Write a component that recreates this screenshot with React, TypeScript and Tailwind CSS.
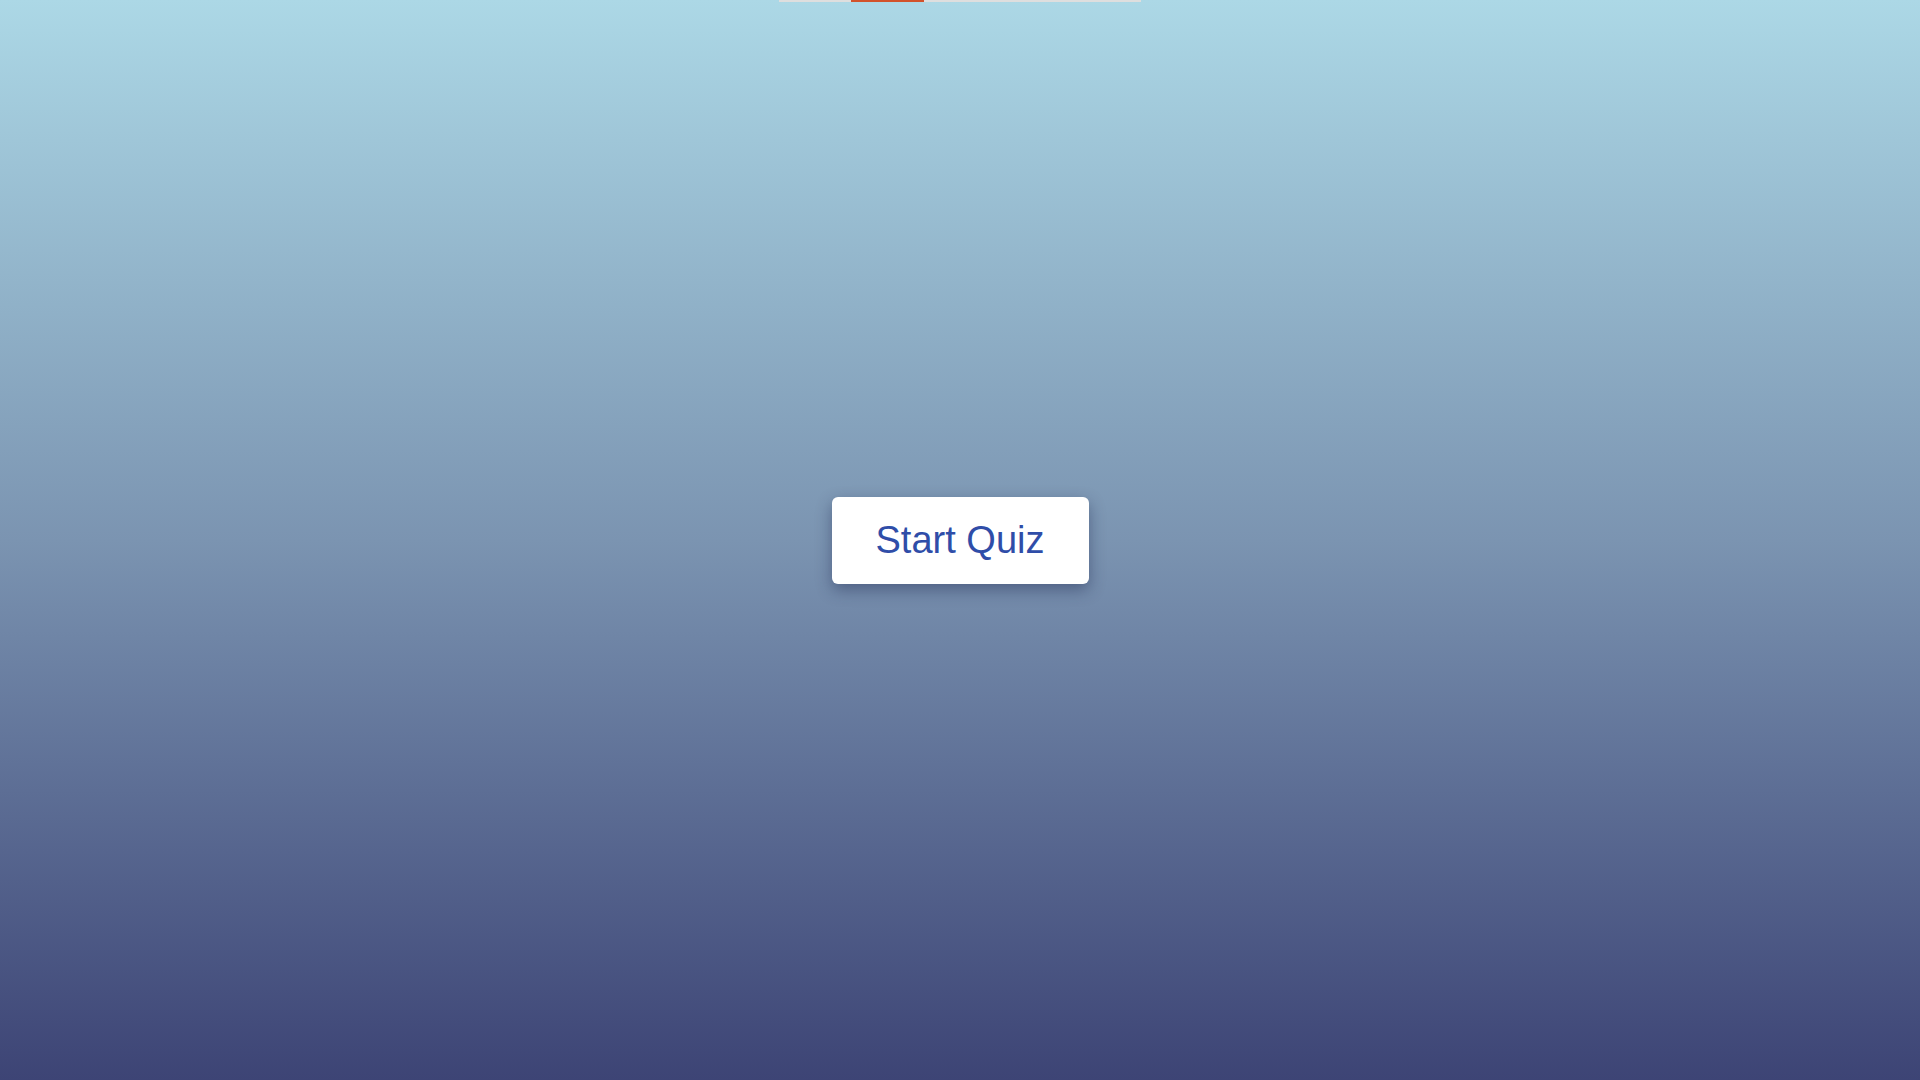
export default function App() {
  const steps = [0, 1, 2, 3, 4];
  const current = 1;

  return (
    <div
      className="relative flex h-screen w-full items-center justify-center bg-gradient-to-b from-[#acd8e6] via-[#7b94b1] to-[#3d4475]"
      style={{ fontFamily: '"Liberation Sans", Arial, sans-serif' }}
    >
      {/* Progress */}
      <div className="absolute left-1/2 top-0 flex h-[2px] w-[362px] -translate-x-1/2">
        {steps.map((s) => (
          <div
            key={s}
            className={`h-full flex-1 ${s === current ? "bg-[#d2522b]" : "bg-[#dedede]"}`}
          />
        ))}
      </div>

      {/* Start */}
      <button className="flex h-[87px] w-[257px] items-center justify-center rounded-[6px] bg-white text-[38px] text-[#2f4da8] shadow-[0_6px_16px_rgba(30,40,80,0.45)]">
        Start Quiz
      </button>
    </div>
  );
}
